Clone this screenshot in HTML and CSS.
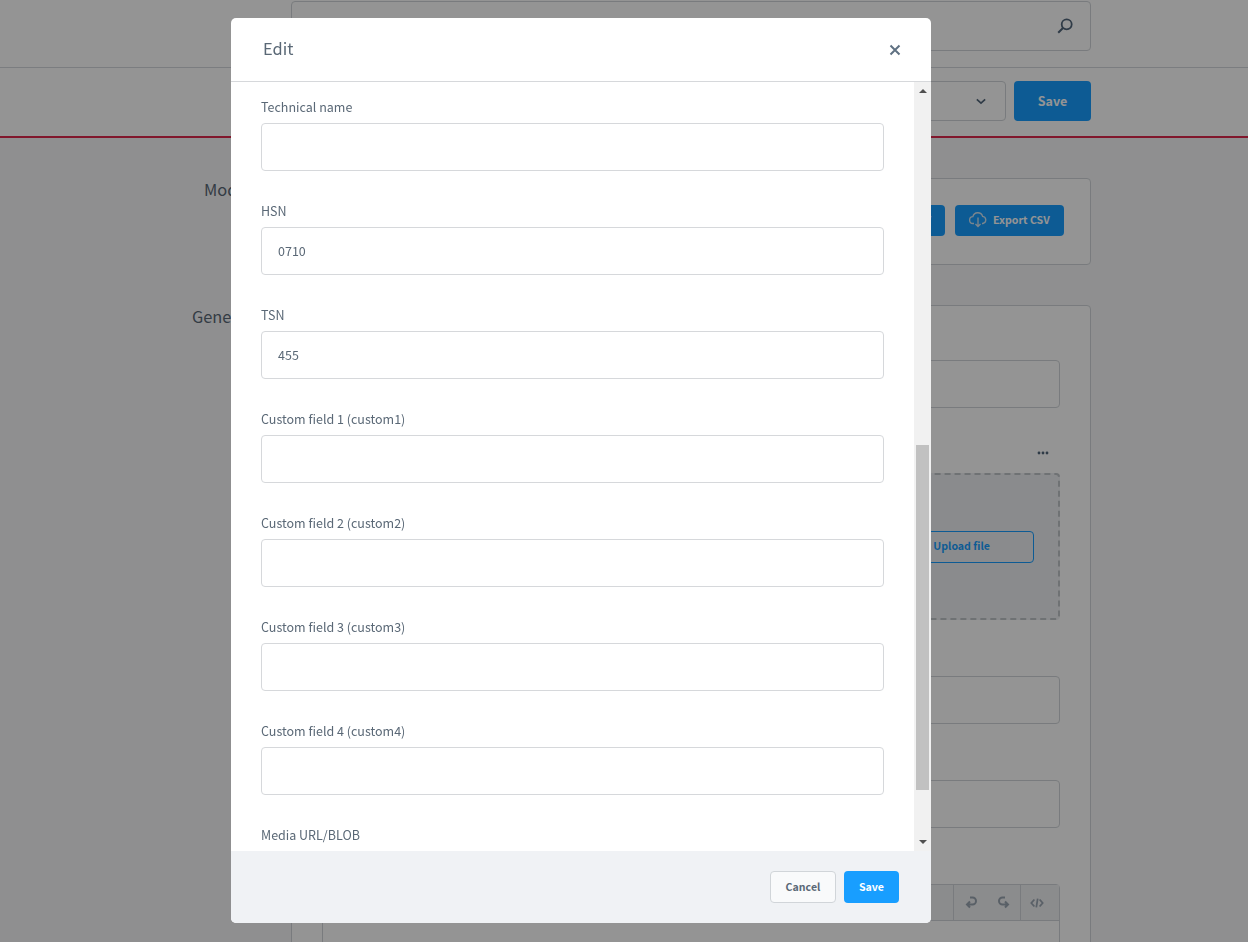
FILE: index.html
```html
<!DOCTYPE html>
<html lang="en">
<head>
<meta charset="utf-8">
<title>Edit</title>
<link rel="stylesheet" href="styles.css">
</head>
<body>
<div class="page">
  <header class="search-bar">
    <div class="search-field">
      <svg class="search-icon" viewBox="0 0 16 16" width="16" height="16"><circle cx="9.7" cy="6.3" r="5" fill="none" stroke="#52667a" stroke-width="1.8"/><path d="M6.2 9.8 1.2 14.8" stroke="#52667a" stroke-width="2" fill="none"/></svg>
    </div>
  </header>
  <div class="action-bar">
    <div class="select-box">
      <svg viewBox="0 0 12 8" width="10" height="7"><path d="M1 1.5 6 6 11 1.5" fill="none" stroke="#52667a" stroke-width="2"/></svg>
    </div>
    <button class="btn-primary btn-large">Save</button>
  </div>
  <main class="content">
    <section class="row">
      <h2 class="row-title">Module</h2>
      <div class="card card-actions">
        <button class="btn-primary btn-small">Import CSV</button>
        <button class="btn-primary btn-small btn-export">
          <svg viewBox="0 0 18 16" width="18" height="16"><path d="M5 11.5H4.2a3.4 3.4 0 0 1-.3-6.8 5 5 0 0 1 9.7-.3 3.6 3.6 0 0 1 .3 7.1H13" fill="none" stroke="#d5e6f3" stroke-width="1.3"/><path d="M9 5.5v9M6.5 12 9 14.5 11.5 12" fill="none" stroke="#d5e6f3" stroke-width="1.3"/></svg>
          Export CSV
        </button>
      </div>
    </section>
    <section class="row">
      <h2 class="row-title">General</h2>
      <div class="card card-general">
        <div class="ghost-input ghost-first"></div>
        <div class="dots">
          <svg viewBox="0 0 12 4" width="12" height="4"><circle cx="2" cy="2" r="1.4" fill="#52667a"/><circle cx="6" cy="2" r="1.4" fill="#52667a"/><circle cx="10" cy="2" r="1.4" fill="#52667a"/></svg>
        </div>
        <div class="dropzone"><button class="btn-outline">Upload file</button></div>
        <div class="ghost-input ghost-a"></div>
        <div class="ghost-input ghost-b"></div>
        <div class="editor">
          <div class="toolbar">
            <span class="tool-group">
              <svg viewBox="0 0 16 16" width="16" height="16"><path d="M7 2.5h2.5a3.5 3.5 0 0 1 0 7H4M7 6.5l-3 3 3 3" fill="none" stroke="#9aa5b1" stroke-width="2"/></svg>
              <svg viewBox="0 0 16 16" width="16" height="16"><path d="M9 2.5H6.5a3.5 3.5 0 0 0 0 7H12M9 6.5l3 3-3 3" fill="none" stroke="#9aa5b1" stroke-width="2"/></svg>
            </span>
            <span class="tool-code">
              <svg viewBox="0 0 16 16" width="14" height="14"><path d="M5 4 1.5 8 5 12M11 4l3.5 4L11 12M8.8 3 7.2 13" fill="none" stroke="#9aa5b1" stroke-width="2"/></svg>
            </span>
          </div>
        </div>
      </div>
    </section>
  </main>
</div>

<div class="overlay"></div>

<div class="modal">
  <div class="modal-header">
    <h1 class="modal-title">Edit</h1>
    <svg class="modal-close" viewBox="0 0 12 12" width="12" height="12"><path d="M1.5 1.5 10.5 10.5M10.5 1.5 1.5 10.5" stroke="#5f7182" stroke-width="2" fill="none"/></svg>
  </div>
  <div class="modal-main">
    <div class="modal-body">
      <div class="field"><label class="field-label">Technical name</label><div class="field-input"></div></div>
      <div class="field"><label class="field-label">HSN</label><div class="field-input">0710</div></div>
      <div class="field"><label class="field-label">TSN</label><div class="field-input">455</div></div>
      <div class="field"><label class="field-label">Custom field 1 (custom1)</label><div class="field-input"></div></div>
      <div class="field"><label class="field-label">Custom field 2 (custom2)</label><div class="field-input"></div></div>
      <div class="field"><label class="field-label">Custom field 3 (custom3)</label><div class="field-input"></div></div>
      <div class="field"><label class="field-label">Custom field 4 (custom4)</label><div class="field-input"></div></div>
      <div class="field"><label class="field-label">Media URL/BLOB</label><div class="field-input"></div></div>
    </div>
    <div class="scrollbar">
      <span class="arrow arrow-up"></span>
      <span class="thumb"></span>
      <span class="arrow arrow-down"></span>
    </div>
  </div>
  <div class="modal-footer">
    <button class="btn-cancel">Cancel</button>
    <button class="btn-save">Save</button>
  </div>
</div>
</body>
</html>
```

FILE: styles.css
```css
* { box-sizing: border-box; }
html, body { margin: 0; height: 942px; overflow: hidden; }
body {
  font-family: "Noto Sans CJK JP", "Lato", sans-serif;
  background: #f6f7f9;
  color: #5a6876;
  font-size: 12.5px;
}
button { font-family: inherit; cursor: pointer; }

.page { height: 942px; overflow: hidden; }
.search-bar {
  height: 68px;
  background: #fff;
  border-bottom: 1px solid #d5d8dc;
  padding-top: 1px;
}
.search-field {
  width: 800px;
  height: 50px;
  margin-left: 291px;
  border: 1px solid #d1d5d9;
  border-radius: 4px;
  display: flex;
  align-items: center;
  justify-content: flex-end;
  padding-right: 17px;
}
.action-bar {
  height: 70px;
  background: #fff;
  border-bottom: 2px solid #de294c;
  display: flex;
  justify-content: flex-end;
  padding: 13px 157px 0 0;
  gap: 8px;
}
.select-box {
  width: 400px;
  height: 40px;
  border: 1px solid #d1d5d9;
  border-radius: 4px;
  display: flex;
  align-items: center;
  justify-content: flex-end;
  padding-right: 19px;
}
.btn-primary {
  background: #189eff;
  color: #fff;
  border: 0;
  border-radius: 4px;
  font-weight: 600;
  padding-bottom: 2px;
}
.btn-large { width: 77px; height: 40px; font-size: 12.5px; }
.btn-small { height: 31px; font-size: 10.6px; padding: 0 14px 2px; }

.content { padding-top: 40px; }
.row {
  display: flex;
  margin-bottom: 40px;
}
.row-title {
  width: 291px;
  margin: 0;
  padding: 0 0 0 192px;
  font-size: 16.4px;
  font-weight: 400;
  line-height: 22px;
  color: #5a6876;
}
.row:first-child .row-title { padding-left: 204px; }
.card {
  width: 800px;
  background: #fff;
  border: 1px solid #d1d5d9;
  border-radius: 4px;
}
.card-actions {
  height: 87px;
  display: flex;
  justify-content: flex-end;
  gap: 10px;
  padding: 26px 26px 0 0;
}
.btn-export {
  display: flex;
  align-items: center;
  gap: 6px;
  width: 109px;
  padding: 0 0 2px 14px;
}
.card-general {
  height: 700px;
  padding: 54px 30px 0 30px;
}
.ghost-input {
  height: 48px;
  border: 1px solid #d1d5d9;
  border-radius: 4px;
}
.dots {
  margin-top: 36px;
  height: 18px;
  display: flex;
  align-items: center;
  justify-content: flex-end;
  padding-right: 11px;
}
.dropzone {
  margin-top: 11px;
  height: 147px;
  border: 2px dashed #c0c4c8;
  border-radius: 4px;
  background: #eef0f3;
  display: flex;
  justify-content: flex-end;
  align-items: center;
  padding-right: 24px;
}
.btn-outline {
  width: 200px;
  height: 32px;
  background: transparent;
  border: 1px solid #189eff;
  border-radius: 4px;
  color: #189eff;
  font-size: 10.6px;
  font-weight: 600;
  text-align: right;
  padding: 0 43px 2px 0;
}
.ghost-a, .ghost-b { margin-top: 56px; }
.editor {
  margin-top: 56px;
  border: 1px solid #d1d5d9;
  border-radius: 4px;
  height: 200px;
}
.toolbar {
  height: 36px;
  border-bottom: 1px solid #d1d5d9;
  background: #f0f1f3;
  display: flex;
  justify-content: flex-end;
}
.tool-group {
  width: 67px;
  border-left: 1px solid #d1d5d9;
  display: flex;
  justify-content: center;
  gap: 17px;
  align-items: center;
}
.tool-code {
  width: 39px;
  border-left: 1px solid #d1d5d9;
  display: flex;
  align-items: center;
  justify-content: center;
  padding-right: 6px;
}

.overlay {
  position: fixed;
  inset: 0;
  background: rgba(0, 0, 0, 0.42);
}
.modal {
  position: absolute;
  left: 231px;
  top: 18px;
  width: 700px;
  height: 905px;
  background: #fff;
  border-radius: 5px;
  overflow: hidden;
  display: flex;
  flex-direction: column;
}
.modal-header {
  height: 64px;
  flex: none;
  border-bottom: 1px solid #d6d8db;
  display: flex;
  align-items: center;
  justify-content: space-between;
  padding: 0 30px 0 32px;
}
.modal-title {
  margin: 0;
  padding-bottom: 3px;
  font-size: 16.4px;
  font-weight: 400;
  color: #5a6876;
  line-height: 22px;
}
.modal-main {
  flex: 1;
  display: flex;
  min-height: 0;
}
.modal-body {
  flex: 1;
  overflow: hidden;
  padding: 16px 30px 0;
}
.field { margin-bottom: 31px; }
.field-label {
  display: block;
  height: 18px;
  line-height: 18px;
  font-size: 12.5px;
  margin-bottom: 7px;
  color: #5a6876;
}
.field-input {
  height: 48px;
  border: 1px solid #d6d8db;
  border-radius: 4px;
  padding: 0 16px;
  line-height: 46px;
  font-size: 12.5px;
  color: #5a6876;
}
.scrollbar {
  width: 17px;
  flex: none;
  background: #f1f1f1;
  position: relative;
}
.thumb {
  position: absolute;
  left: 2px;
  right: 2px;
  top: 363px;
  height: 345px;
  background: #c1c1c1;
}
.arrow {
  position: absolute;
  left: 5px;
  width: 0;
  height: 0;
  border-left: 4px solid transparent;
  border-right: 4px solid transparent;
}
.arrow-up { top: 7px; border-bottom: 4px solid #505050; }
.arrow-down { bottom: 7px; border-top: 4px solid #505050; }
.modal-footer {
  height: 72px;
  flex: none;
  background: #f0f2f5;
  display: flex;
  justify-content: flex-end;
  align-items: center;
  gap: 8px;
  padding-right: 32px;
}
.btn-cancel, .btn-save {
  height: 32px;
  border-radius: 4px;
  font-size: 10.6px;
  font-weight: 600;
  padding: 0 0 2px;
}
.btn-cancel {
  width: 66px;
  background: #f9fafb;
  border: 1px solid #d1d5d9;
  color: #5a6876;
}
.btn-save {
  width: 55px;
  background: #189eff;
  border: 0;
  color: #fff;
}
```
